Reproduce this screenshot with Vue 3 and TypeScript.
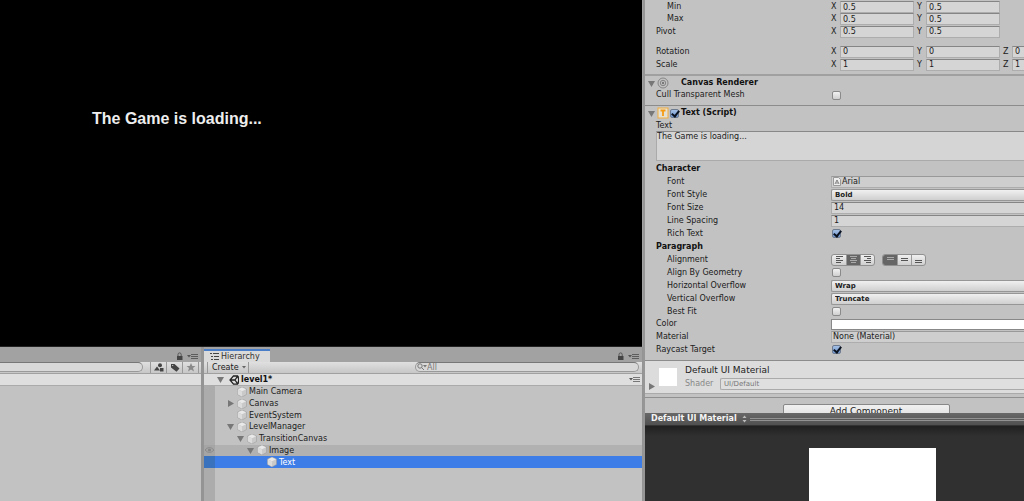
<script setup lang="ts">
import { reactive, ref } from 'vue'

interface VectorRow {
  label: string
  axes: { axis: string; value: string }[]
  indent: boolean
  size: 'short' | 'normal' | 'spaced'
}

interface TreeNode {
  name: string
  depth: number
  fold: 'open' | 'closed' | 'none'
  state?: 'hovered' | 'selected'
}

const vectors = reactive<VectorRow[]>([
  { label: 'Min', indent: true, size: 'short', axes: [{ axis: 'X', value: '0.5' }, { axis: 'Y', value: '0.5' }] },
  { label: 'Max', indent: true, size: 'short', axes: [{ axis: 'X', value: '0.5' }, { axis: 'Y', value: '0.5' }] },
  { label: 'Pivot', indent: false, size: 'normal', axes: [{ axis: 'X', value: '0.5' }, { axis: 'Y', value: '0.5' }] },
  { label: 'Rotation', indent: false, size: 'spaced', axes: [{ axis: 'X', value: '0' }, { axis: 'Y', value: '0' }, { axis: 'Z', value: '0' }] },
  { label: 'Scale', indent: false, size: 'normal', axes: [{ axis: 'X', value: '1' }, { axis: 'Y', value: '1' }, { axis: 'Z', value: '1' }] },
])

const nodes: TreeNode[] = [
  { name: 'Main Camera', depth: 1, fold: 'none' },
  { name: 'Canvas', depth: 1, fold: 'closed' },
  { name: 'EventSystem', depth: 1, fold: 'none' },
  { name: 'LevelManager', depth: 1, fold: 'open' },
  { name: 'TransitionCanvas', depth: 2, fold: 'open' },
  { name: 'Image', depth: 3, fold: 'open', state: 'hovered' },
  { name: 'Text', depth: 4, fold: 'none', state: 'selected' },
]

const cullMesh = ref(false)
const enabled = ref(true)
const content = ref('The Game is loading...')
const fontStyle = ref('Bold')
const fontSize = ref('14')
const lineSpacing = ref('1')
const richText = ref(true)
const horizontalAlign = ref(1)
const verticalAlign = ref(0)
const alignByGeometry = ref(false)
const horizontalOverflow = ref('Wrap')
const verticalOverflow = ref('Truncate')
const bestFit = ref(false)
const raycastTarget = ref(true)
const shader = ref('UI/Default')
const assetSearch = ref('')
const hierarchySearch = ref('')

const horizontalGlyphs = ['M2 1.5h7M2 3.5h4M2 5.5h7M2 7.5h5', 'M2 1.5h7M3 3.5h5M2 5.5h7M3 7.5h5', 'M2 1.5h7M5 3.5h4M2 5.5h7M4 7.5h5']
const verticalGlyphs = ['M2 2.5h7M2 4.5h7', 'M2 3.5h7M2 5.5h7', 'M2 5.5h7M2 7.5h7']
const horizontalNames = ['Align left', 'Align center', 'Align right']
const verticalNames = ['Align top', 'Align middle', 'Align bottom']
</script>

<template>
  <div class="editor">
    <div class="workspace">
      <main class="game"><p class="game-text">{{ content }}</p></main>
      <div class="docks">
        <section class="dock project" aria-label="Project">
          <div class="tabs">
            <span class="fill"></span>
            <button class="icon-button" aria-label="Lock"><svg width="7" height="9" viewBox="0 0 7 9"><path d="M2 4V2.500a1.600 1.600 0 0 1 3.200 0V4" fill="none" stroke="#555" /><path d="M1 4h5.500v4H1z" fill="#444" /></svg></button>
            <button class="icon-button" aria-label="Panel menu"><svg width="11" height="7" viewBox="0 0 11 7"><path d="M0 2h4L2 4.500z" fill="#555" /><path d="M4 1.500h7M4 3.500h7M4 5.500h7" stroke="#5c5c5c" /></svg></button>
          </div>
          <div class="toolbar">
            <input v-model="assetSearch" class="search asset-search" aria-label="Search assets" />
            <button class="tool" aria-label="Search by type"><svg width="10" height="9" viewBox="0 0 10 9"><circle cx="6" cy="2.200" r="2" /><path d="M0 7.500 3 3.500l3 4zM6 5h3.500v3.500H6z" /></svg></button>
            <button class="tool" aria-label="Search by label"><svg width="10" height="9" viewBox="0 0 10 9"><path fill-rule="evenodd" d="M1 1h3.500L9.500 5.500 6.500 8.800 1 4.500zM2.200 2.100v1h1v-1z" /></svg></button>
            <button class="tool faint" aria-label="Save search"><svg width="10" height="9" viewBox="0 0 10 9"><path d="M5 0l1.300 3H9.500L7 5l1 3.500L5 6.600 2 8.500 3 5 .5 3h3.200z" /></svg></button>
            <span class="tool-end"></span>
          </div>
          <div class="strip"></div>
        </section>

        <section class="dock hierarchy" aria-label="Hierarchy">
          <div class="tabs">
            <button class="tab">
              <svg width="9" height="7" viewBox="0 0 9 7"><path d="M0 .5h2M3 .5h6M1 3.500h2M4 3.500h5M1 6.500h2M4 6.500h5" stroke="#444" /></svg>
              Hierarchy
            </button>
            <span class="fill"></span>
            <button class="icon-button" aria-label="Lock"><svg width="7" height="9" viewBox="0 0 7 9"><path d="M2 4V2.500a1.600 1.600 0 0 1 3.200 0V4" fill="none" stroke="#555" /><path d="M1 4h5.500v4H1z" fill="#444" /></svg></button>
            <button class="icon-button" aria-label="Panel menu"><svg width="11" height="7" viewBox="0 0 11 7"><path d="M0 2h4L2 4.500z" fill="#555" /><path d="M4 1.500h7M4 3.500h7M4 5.500h7" stroke="#5c5c5c" /></svg></button>
          </div>
          <div class="toolbar">
            <button class="create">Create <svg width="4" height="3" viewBox="0 0 4 3"><path d="M0 0h4L2 2.500z" fill="#666" /></svg></button>
            <div class="search hierarchy-search">
              <svg width="10" height="8" viewBox="0 0 10 8"><circle cx="3" cy="3" r="2.200" fill="none" stroke="#777" /><path d="M4.500 4.500 7 7" stroke="#777" /><path d="M6 2h4L8 4.500z" fill="#777" /></svg>
              <input v-model="hierarchySearch" placeholder="All" aria-label="Search hierarchy" />
            </div>
          </div>
          <div class="strip scene">
            <button class="fold" aria-label="Toggle scene"><svg width="7" height="7" viewBox="0 0 7 7"><path d="M0 1h7L3.500 7z" /></svg></button>
            <svg class="unity" width="10" height="10" viewBox="0 0 10 10"><path d="M9 1 4.500.8 1 5l3.500 4.200L9 9M9 1l.8 4L9 9M1 5h5M6 5l2.700-4M6 5l2.700 4" fill="none" stroke="#222" stroke-width="1.300" /></svg>
            <strong>level1*</strong>
            <span class="fill"></span>
            <button class="icon-button" aria-label="Scene menu"><svg width="11" height="7" viewBox="0 0 11 7"><path d="M0 2h4L2 4.500z" fill="#555" /><path d="M4 1.500h7M4 3.500h7M4 5.500h7" stroke="#777" /></svg></button>
          </div>
          <div class="tree-area">
            <ul class="tree">
              <li v-for="node in nodes" :key="node.name" :class="['node', 'depth-' + node.depth, node.state]">
                <span class="gutter"><svg v-if="node.state === 'hovered'" width="9" height="6" viewBox="0 0 9 6"><path d="M0 3q4.500-5 9 0q-4.500 5-9 0z" fill="none" stroke="#8b8b8b" /><circle cx="4.500" cy="3" r="1.600" fill="#858585" /></svg></span>
                <span class="fold">
                  <button v-if="node.fold !== 'none'" :aria-label="'Toggle ' + node.name"><svg width="7" height="7" viewBox="0 0 7 7"><path :d="node.fold === 'open' ? 'M0 1h7L3.500 7z' : 'M1 0 7 3.500 1 7z'" /></svg></button>
                </span>
                <svg class="cube" width="10" height="10" viewBox="0 0 10 10"><path d="M5 0 9.500 2v5.500L5 10 .5 7.500V2z" fill="#c9c9c9" stroke="#999" stroke-width=".5" /><path d="M5 .4 9 2.200 5 4.200 1 2.200z" fill="#e9e9e9" /><path d="M.8 2.500 5 4.500v5L.8 7.300z" fill="#dcdcdc" /></svg>
                <span>{{ node.name }}</span>
              </li>
            </ul>
          </div>
        </section>
      </div>
    </div>

    <aside class="inspector">
      <div class="inspector-body">
        <section class="component transform">
          <div v-for="row in vectors" :key="row.label" :class="['row', row.size, { indent: row.indent }]">
            <span class="label">{{ row.label }}</span>
            <div class="vector">
              <label v-for="item in row.axes" :key="item.axis"><span>{{ item.axis }}</span><input v-model="item.value" class="field" /></label>
            </div>
          </div>
        </section>

        <section class="component renderer">
          <header class="heading">
            <button class="fold" aria-label="Toggle Canvas Renderer"><svg width="7" height="7" viewBox="0 0 7 7"><path d="M0 1h7L3.500 7z" /></svg></button>
            <svg class="badge" width="12" height="12" viewBox="0 0 12 12"><g fill="none" stroke="#858585"><circle cx="6" cy="6" r="5" /><circle cx="6" cy="6" r="2.700" /></g><circle cx="6" cy="6" r="1.200" fill="#777" /></svg>
            <span class="check-space"></span>
            <h2>Canvas Renderer</h2>
          </header>
          <div class="row">
            <label class="label" for="cull">Cull Transparent Mesh</label>
            <input id="cull" v-model="cullMesh" type="checkbox" />
          </div>
        </section>

        <section class="component script">
          <header class="heading">
            <button class="fold" aria-label="Toggle Text"><svg width="7" height="7" viewBox="0 0 7 7"><path d="M0 1h7L3.500 7z" /></svg></button>
            <svg class="badge" width="12" height="12" viewBox="0 0 12 12"><rect x="1" y="1" width="10" height="10" fill="#e5e0d4" stroke="#f2ad3d" /><path d="M3.500 3.500h5M6 3v6" stroke="#f59b13" stroke-width="1.800" /></svg>
            <input v-model="enabled" type="checkbox" aria-label="Text enabled" />
            <h2>Text (Script)</h2>
          </header>
          <div class="content-block">
            <label for="content">Text</label>
            <textarea id="content" v-model="content"></textarea>
          </div>
          <h3>Character</h3>
          <div class="row indent">
            <span class="label">Font</span>
            <button class="field object"><svg width="8" height="9" viewBox="0 0 8 9"><path d="M.5.5h5l2 2v6h-7z" fill="#eee" stroke="#999" /><path d="M2 7 4 3l2 4M3 6h2" fill="none" stroke="#666" stroke-width=".8" /></svg>Arial</button>
          </div>
          <div class="row indent">
            <label class="label" for="style">Font Style</label>
            <select id="style" v-model="fontStyle" class="popup"><option>Normal</option><option>Bold</option><option>Italic</option></select>
          </div>
          <div class="row indent">
            <label class="label" for="size">Font Size</label>
            <input id="size" v-model="fontSize" class="field" />
          </div>
          <div class="row indent">
            <label class="label" for="spacing">Line Spacing</label>
            <input id="spacing" v-model="lineSpacing" class="field" />
          </div>
          <div class="row indent">
            <label class="label" for="rich">Rich Text</label>
            <input id="rich" v-model="richText" type="checkbox" />
          </div>
          <h3>Paragraph</h3>
          <div class="row indent">
            <span class="label">Alignment</span>
            <div class="segments">
              <button v-for="(glyph, i) in horizontalGlyphs" :key="glyph" :class="{ on: horizontalAlign === i }" :aria-label="horizontalNames[i]" @click="horizontalAlign = i"><svg width="11" height="9" viewBox="0 0 11 9"><path :d="glyph" /></svg></button>
            </div>
            <div class="segments">
              <button v-for="(glyph, i) in verticalGlyphs" :key="glyph" :class="{ on: verticalAlign === i }" :aria-label="verticalNames[i]" @click="verticalAlign = i"><svg width="11" height="9" viewBox="0 0 11 9"><path :d="glyph" /></svg></button>
            </div>
          </div>
          <div class="row indent">
            <label class="label" for="geometry">Align By Geometry</label>
            <input id="geometry" v-model="alignByGeometry" type="checkbox" />
          </div>
          <div class="row indent">
            <label class="label" for="horizontal">Horizontal Overflow</label>
            <select id="horizontal" v-model="horizontalOverflow" class="popup"><option>Wrap</option><option>Overflow</option></select>
          </div>
          <div class="row indent">
            <label class="label" for="vertical">Vertical Overflow</label>
            <select id="vertical" v-model="verticalOverflow" class="popup"><option>Truncate</option><option>Overflow</option></select>
          </div>
          <div class="row indent">
            <label class="label" for="fit">Best Fit</label>
            <input id="fit" v-model="bestFit" type="checkbox" />
          </div>
          <div class="row short">
            <span class="label">Color</span>
            <button class="swatch" aria-label="Color"></button>
          </div>
          <div class="row">
            <span class="label">Material</span>
            <button class="field object">None (Material)</button>
          </div>
          <div class="row">
            <label class="label" for="raycast">Raycast Target</label>
            <input id="raycast" v-model="raycastTarget" type="checkbox" />
          </div>
        </section>

        <section class="material">
          <button class="fold" aria-label="Toggle material"><svg width="7" height="7" viewBox="0 0 7 7"><path d="M1 0 7 3.500 1 7z" /></svg></button>
          <div class="thumb"></div>
          <div class="material-info">
            <h2>Default UI Material</h2>
            <div class="shader">
              <label for="shader">Shader</label>
              <select id="shader" v-model="shader" class="popup" disabled><option>UI/Default</option></select>
            </div>
          </div>
        </section>
        <div class="add"><button>Add Component</button></div>
      </div>
      <section class="preview">
        <header><strong>Default UI Material</strong><svg width="5" height="8" viewBox="0 0 5 8"><path d="M.5 3 2.500.5 4.500 3zM.5 5l2 2.500 2-2.500z" fill="#bbb" /></svg><span class="grip"></span></header>
        <div class="preview-view"><div class="preview-plane"></div></div>
      </section>
    </aside>
  </div>
</template>

<style>
body { overflow: hidden; }
</style>

<style scoped>
.editor {
  display: grid;
  grid-template-columns: minmax(0, 643fr) minmax(0, 381fr);
  height: 100vh;
  overflow: hidden;
  background: #a2a2a2;
  color: #202020;
  font: 8px/12px "DejaVu Sans", sans-serif;
}
.editor * { box-sizing: border-box; }
button, input, select, textarea { margin: 0; padding: 0; border: 0; border-radius: 0; font: inherit; color: inherit; background: none; }
h2, h3, p, ul { margin: 0; padding: 0; }
h2, h3 { font-size: 8px; font-weight: bold; color: #111; }
svg { display: block; flex: none; }
.fill { flex: 1; }
.fold { flex: none; width: 7px; }
.fold path { fill: #777; }

.workspace { display: flex; flex-direction: column; min-width: 0; }
.game { flex: 1; margin-right: 1px; padding: 110px 0 0 92px; background: #000; border-bottom: 1px solid #222; }
.game-text { font: bold 16px/18px "Liberation Sans", sans-serif; color: #eee; }
.docks { display: grid; grid-template-columns: 202fr 439fr; gap: 2px; flex: none; height: 154px; background: #949494; }
.dock { display: flex; flex-direction: column; min-width: 0; margin-right: 1px; background: #c2c2c2; }
.tabs { display: flex; align-items: center; gap: 4px; flex: none; height: 15px; padding: 3px 3px 0 0; background: #a2a2a2; }
.tab { display: flex; align-items: center; gap: 2px; align-self: flex-end; height: 13px; padding: 0 10px 0 6px; border-top: 2px solid #4a7fc8; background: #dadada; line-height: 10px; color: #333; }
.toolbar { display: flex; flex: none; height: 12px; background: linear-gradient(#e0e0e0, #c6c6c6); border-bottom: 1px solid #a0a0a0; }
.search { height: 10px; border: 1px solid #999; border-top-color: #777; border-radius: 5px; background: #d8d8d8; }
.asset-search { flex: 1; min-width: 0; margin-right: 7px; border-left: 0; border-radius: 0 5px 5px 0; }
.tool { display: grid; place-items: center; width: 16px; border-left: 1px solid #999; fill: #444; }
.tool.faint { fill: #8a8a8a; }
.tool-end { width: 3px; border-left: 1px solid #999; }
.strip { flex: none; height: 12px; background: #dedede; border-bottom: 1px solid #aaa; }
.create { display: flex; align-items: center; gap: 3px; margin-left: 3px; padding: 0 2px 0 4px; border: solid #999; border-width: 0 1px; line-height: 10px; }
.hierarchy-search { display: flex; align-items: center; flex: 0 1 224px; min-width: 0; margin: 0 3px 0 auto; padding-left: 1px; }
.hierarchy-search input { flex: 1; min-width: 0; outline: 0; line-height: 8px; }
.hierarchy-search input::placeholder { color: #777; opacity: 1; }
.scene { display: flex; align-items: center; padding: 0 2px 0 13px; }
.unity { margin: 0 2px 0 5px; }
.scene strong { font-size: 8px; color: #111; }
.tree-area { flex: 1; background: linear-gradient(90deg, #acacac 11px, #c2c2c2 11px); }
.tree { display: grid; grid-auto-rows: 1fr; height: 82px; list-style: none; }
.node { display: flex; align-items: center; }
.node span { line-height: 11px; }
.node .fold button { display: block; }
.depth-1 .fold { margin-left: 12px; }
.depth-2 .fold { margin-left: 22px; }
.depth-3 .fold { margin-left: 32px; }
.depth-4 .fold { margin-left: 42px; }
.cube { margin: 0 2px 0 3px; }
.gutter { display: grid; place-items: center; align-self: stretch; width: 11px; }
.hovered { background: #b1b1b1; }
.hovered .gutter { background: #a5a5a5; }
.selected { background: #3d7de7; color: #fff; }
.selected .gutter { background: #3b72bd; }

.inspector { display: flex; flex-direction: column; min-width: 0; min-height: 0; border-left: 2px solid #969696; background: #c2c2c2; overflow: hidden; }
.inspector-body { flex: 1; min-height: 0; overflow: hidden; }
.component { padding-left: 11px; border-bottom: 1px solid #8c8c8c; }
.transform { padding-top: 1px; padding-bottom: 3px; border-bottom: 2px solid #a0a0a0; }
.row { display: flex; align-items: center; height: 13px; }
.row.short { height: 12px; }
.row.spaced { margin-top: 7px; }
.label { flex: none; width: 175px; white-space: nowrap; }
.indent .label { padding-left: 11px; }
.field { flex: 1; min-width: 0; height: 12px; padding: 0 2px; border: 1px solid #adadad; border-top-color: #858585; background: #d5d5d5; outline: 0; line-height: 10px; text-align: left; }
.vector { display: flex; gap: 3px; }
.vector label { display: flex; align-items: center; }
.vector span { width: 9px; }
.vector .field { flex: none; width: 74px; }
.row > .field { border-right: 0; }
.object { display: flex; align-items: center; gap: 1px; padding-left: 1px; border-top-color: #999; background: #cecece; }
.heading { display: flex; align-items: center; height: 14px; margin-left: -8px; }
.badge { margin: 0 0 0 2px; }
.check-space { width: 12px; }
.heading input { margin-right: 2px; }
input[type="checkbox"] { appearance: none; position: relative; flex: none; width: 9px; height: 9px; margin-left: 1px; border: 1px solid #8a8a8a; border-radius: 2px; background: linear-gradient(#f2f2f2, #cfcfcf); }
input[type="checkbox"]:checked { background: linear-gradient(#a4bfe3, #6f97d0); border-color: #6d7b90; }
input[type="checkbox"]:checked::after { content: ""; position: absolute; left: 2px; top: -1px; width: 3px; height: 6px; border: solid #0a1220; border-width: 0 2px 2px 0; transform: rotate(38deg); }
.renderer .row { height: 10px; }
.renderer { padding-bottom: 5px; }
.script { padding-bottom: 4px; }
.content-block { display: flex; flex-direction: column; line-height: 11px; }
.content-block textarea { height: 30px; border: 1px solid #aaa; border-top-color: #888; border-right: 0; background: #d5d5d5; resize: none; outline: 0; line-height: 10px; }
h3 { height: 13px; line-height: 13px; }
.content-block + h3 { margin-top: 1px; }
.popup { appearance: none; flex: 1; min-width: 0; height: 12px; padding: 0 3px; border: 1px solid #969696; border-right: 0; border-radius: 2px 0 0 2px; background: linear-gradient(#f0f0f0, #cfcfcf); font-size: 7px; font-weight: bold; line-height: 10px; }
.segments { display: flex; height: 12px; margin-right: 7px; border: 1px solid #909090; border-radius: 3px; overflow: hidden; background: linear-gradient(#f0f0f0, #cfcfcf); }
.segments button { display: grid; place-items: center; width: 14px; }
.segments button + button { border-left: 1px solid #999; }
.segments path { stroke: #555; fill: none; }
.segments .on { background: #656565; }
.segments .on path { stroke: #aaa; }
.swatch { flex: 1; height: 11px; border: 1px solid #888; border-right: 0; background: #fff; }
.material { display: flex; height: 33px; padding-left: 3px; background: #dcdcdc; border-bottom: 1px solid #aaa; }
.material .fold { align-self: flex-end; margin-bottom: 3px; }
.thumb { flex: none; width: 18px; height: 18px; margin: 7px 8px 0 4px; background: #fff; }
.material-info { flex: 1; min-width: 0; padding-top: 3px; }
.material h2 { font-size: 9px; font-weight: normal; color: #222; }
.shader { display: flex; align-items: center; height: 16px; color: #888; }
.shader label { width: 35px; }
.shader .popup { border-color: #aaa; background: #dfdfdf; font-weight: normal; color: #777; opacity: 1; }
.add { display: flex; justify-content: center; margin-top: 3px; padding: 6px 0 0 63px; border-top: 1px solid #909090; }
.add button { display: flex; justify-content: center; width: 167px; height: 18px; border: 1px solid #888; border-radius: 2px; background: linear-gradient(#f0f0f0, #dadada); font-size: 9px; line-height: 12px; }
.preview { display: flex; flex-direction: column; flex: none; height: 88px; }
.preview header { display: flex; align-items: center; flex: none; height: 13px; padding-left: 6px; background: linear-gradient(#686868, #505050); border-bottom: 1px solid #333; color: #f4f4f4; }
.preview header svg { margin: 0 3px 0 5px; }
.grip { flex: 1; height: 3px; border: solid #929292; border-width: 1px 0; }
.preview-view { display: flex; justify-content: center; flex: 1; padding: 22px 0 0 75px; background: linear-gradient(#202020, #303030 10px); }
.preview-plane { width: 127px; height: 100%; background: #fff; }
</style>
